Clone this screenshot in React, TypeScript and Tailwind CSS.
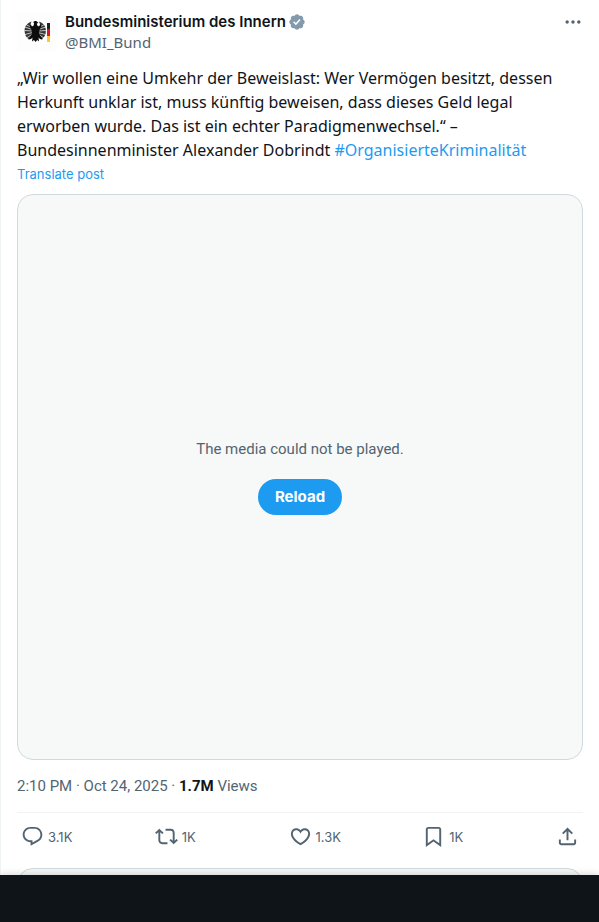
import type { ReactNode } from "react";

type IconProps = { d: string; className?: string };

function Icon({ d, className = "size-[23px]" }: IconProps) {
  return (
    <svg viewBox="0 0 24 24" aria-hidden="true" className={`shrink-0 fill-current ${className}`}>
      <path d={d} />
    </svg>
  );
}

const paths = {
  more: "M3 12c0-1.1.9-2 2-2s2 .9 2 2-.9 2-2 2-2-.9-2-2zm9 2c1.1 0 2-.9 2-2s-.9-2-2-2-2 .9-2 2 .9 2 2 2zm7 0c1.1 0 2-.9 2-2s-.9-2-2-2-2 .9-2 2 .9 2 2 2z",
  reply:
    "M1.751 10c0-4.42 3.584-8 8.005-8h4.366c4.49 0 8.129 3.64 8.129 8.13 0 2.96-1.607 5.68-4.196 7.11l-8.054 4.46v-3.69h-.067c-4.49.1-8.183-3.51-8.183-8.01zm8.005-6c-3.317 0-6.005 2.69-6.005 6 0 3.37 2.77 6.08 6.138 6.01l.351-.01h1.761v2.3l5.087-2.81c1.951-1.08 3.163-3.13 3.163-5.36 0-3.39-2.744-6.13-6.129-6.13H9.756z",
  repost:
    "M4.5 3.88l4.432 4.14-1.364 1.46L5.5 7.55V16c0 1.1.896 2 2 2H13v2H7.5c-2.209 0-4-1.79-4-4V7.55L1.432 9.48.068 8.02 4.5 3.88zM16.5 6H11V4h5.5c2.209 0 4 1.79 4 4v8.45l2.068-1.93 1.364 1.46-4.432 4.14-4.432-4.14 1.364-1.46 2.068 1.93V8c0-1.1-.896-2-2-2z",
  like: "M16.697 5.5c-1.222-.06-2.679.51-3.89 2.16l-.805 1.09-.806-1.09C9.984 6.01 8.526 5.44 7.304 5.5c-1.243.07-2.349.78-2.91 1.91-.552 1.12-.633 2.78.479 4.82 1.074 1.97 3.257 4.27 7.129 6.61 3.87-2.34 6.052-4.64 7.126-6.61 1.111-2.04 1.03-3.7.477-4.82-.561-1.13-1.666-1.84-2.908-1.91zm4.187 7.69c-1.351 2.48-4.001 5.12-8.379 7.67l-.503.3-.504-.3c-4.379-2.55-7.029-5.19-8.382-7.67-1.36-2.5-1.41-4.86-.514-6.67.887-1.79 2.647-2.91 4.601-3.01 1.651-.09 3.368.56 4.798 2.01 1.429-1.45 3.146-2.1 4.796-2.01 1.954.1 3.714 1.22 4.601 3.01.896 1.81.846 4.17-.514 6.67z",
  bookmark:
    "M4 4.5C4 3.12 5.119 2 6.5 2h11C18.881 2 20 3.12 20 4.5v18.44l-8-5.71-8 5.71V4.5zM6.5 4c-.276 0-.5.22-.5.5v14.56l6-4.29 6 4.29V4.5c0-.28-.224-.5-.5-.5h-11z",
  share:
    "M12 2.59l5.7 5.7-1.41 1.42L13 6.41V16h-2V6.41l-3.3 3.3-1.41-1.42L12 2.59zM21 15l-.02 3.51c0 1.38-1.12 2.49-2.5 2.49H5.5C4.11 21 3 19.88 3 18.5V15h2v3.5c0 .28.22.5.5.5h12.98c.28 0 .5-.22.5-.5L19 15h2z",
};

function Avatar() {
  return (
    <svg viewBox="0 0 40 40" role="img" aria-label="BMI" className="size-10 shrink-0">
      <path fill="#fdfdfd" d="M0 0h40v40H0z" />
      <path
        fill="#333"
        d="M14.5 9.500C10 11 7.600 14.500 7.600 18.500c0 4 1.400 7 4.400 9l4-5-.500-6-2.500-3zM22 9.500c4.500 1.500 6.900 5 6.900 9 0 4-1.400 7-4.400 9l-4-5 .5-6 2.500-3z"
      />
      <path
        fill="none"
        stroke="#fdfdfd"
        strokeWidth="0.700"
        d="M15.500 16 9 12.500M15.500 17.500 7.500 15M15.500 19l-8-.5M15.500 20.500l-7.500 2M15.500 22 9.500 26M21 16l6.500-3.500M21 17.500l8-2.500M21 19l8-.5M21 20.500l7.500 2M21 22l6 4"
      />
      <path
        fill="#0c0c0c"
        d="M16.200 10.500c.5-1.300 2.300-1.900 3.700-1l1.600 1.500-1.800.4.6 2.100 1.700 1 1.500-2.500.8 2.500-1.800 3.500-.5 3.500 2 3.500 1.500 2.500-2.500-.5-1.500-1.500.5 4-1.700-1.500-1.800 2-1.500-2-2 1.500.5-4-1.500 1.500-2.500.5 1.500-2.500 2-3.500-.5-3.500-1.800-3.500.8-2.500 1.500 2.500 1.700-1 .4-2.500z"
      />
      <path fill="#222" d="M30 11h3v6h-3z" />
      <path fill="#e3122a" d="M30 17h3v7h-3z" />
      <path fill="#ffc62e" d="M30 24h3v6h-3z" />
    </svg>
  );
}

function Verified() {
  return (
    <svg viewBox="0 0 22 22" role="img" aria-label="Verified account" className="size-[18px] shrink-0 fill-[#829aab]">
      <path d="M20.396 11c-.018-.646-.215-1.275-.57-1.816-.354-.54-.852-.972-1.438-1.246.223-.607.27-1.264.14-1.897-.131-.634-.437-1.218-.882-1.687-.47-.445-1.053-.75-1.687-.882-.633-.13-1.290-.083-1.897.14-.273-.587-.704-1.086-1.245-1.440S11.647 1.620 11 1.604c-.646.017-1.273.213-1.813.568s-.969.854-1.240 1.440c-.608-.223-1.267-.272-1.902-.14-.635.130-1.220.436-1.690.882-.445.470-.749 1.055-.878 1.688-.130.633-.080 1.290.144 1.896-.587.274-1.087.705-1.443 1.245-.356.540-.555 1.170-.574 1.817.020.647.218 1.276.574 1.817.356.540.856.972 1.443 1.245-.224.606-.274 1.263-.144 1.896.130.634.433 1.218.877 1.688.470.443 1.054.747 1.687.878.633.132 1.290.084 1.897-.136.274.586.705 1.084 1.246 1.439.540.354 1.170.551 1.816.569.647-.016 1.276-.213 1.817-.567s.972-.854 1.245-1.440c.604.239 1.266.296 1.903.164.636-.132 1.220-.447 1.680-.907.460-.460.776-1.044.908-1.681s.075-1.299-.165-1.903c.586-.274 1.084-.705 1.439-1.246.354-.540.551-1.170.569-1.816zM9.662 14.850l-3.429-3.428 1.293-1.302 2.072 2.072 4.400-4.794 1.347 1.246z" />
    </svg>
  );
}

function Action({ d, label, children }: { d: string; label: string; children: ReactNode }) {
  return (
    <div className="flex flex-1">
      <button type="button" aria-label={label} className="flex items-center gap-1">
        <Icon d={d} />
        <span className="pt-0.5">{children}</span>
      </button>
    </div>
  );
}

export default function App() {
  return (
    <div className="flex h-screen flex-col bg-white font-['Roboto','Noto_Sans',sans-serif] text-[#0f1419]">
      <main className="min-h-0 flex-1 overflow-hidden border-l border-[#eff3f4] px-4 pt-3">
        <article>
          <header className="flex gap-2">
            <Avatar />
            <div className="min-w-0 flex-1 font-['Inter',sans-serif] text-[15px] leading-5">
              <div className="flex items-center gap-0.5">
                <a href="#profile" className="font-semibold">Bundesministerium des Innern</a>
                <Verified />
              </div>
              <a href="#profile" className="block font-['Noto_Sans',sans-serif] text-[#536471]">@BMI_Bund</a>
            </div>
            <button type="button" aria-label="More" className="flex h-5 items-center text-[#536471]">
              <Icon d={paths.more} className="size-5" />
            </button>
          </header>
          <p className="mt-3.5 font-['Noto_Sans',sans-serif] text-base leading-6">
            „Wir wollen eine Umkehr der Beweislast: Wer Vermögen besitzt, dessen Herkunft unklar ist, muss künftig beweisen, dass dieses Geld legal erworben wurde. Das ist ein echter Paradigmenwechsel.“ – Bundesinnenminister Alexander Dobrindt{" "}
            <a href="#hashtag" className="text-[#1d9bf0]">#OrganisierteKriminalität</a>
          </p>
          <button type="button" className="block font-['Inter',sans-serif] text-[13px] leading-6 text-[#1d9bf0]">Translate post</button>
          <section className="mt-2 flex aspect-square flex-col items-center justify-center gap-5 rounded-2xl border border-[#cfd9de] bg-[#f7f9f9] text-[15px] leading-5">
            <p className="text-[#536471]">The media could not be played.</p>
            <button type="button" className="h-9 rounded-full bg-[#1d9bf0] px-[17px] font-['Inter',sans-serif] font-bold text-white">Reload</button>
          </section>
          <p className="my-4 text-[15px] leading-5 text-[#536471]">
            <a href="#status">2:10 PM · Oct 24, 2025</a> · <span className="font-bold text-[#0f1419]">1.7M</span> Views
          </p>
          <div className="flex items-center border-t border-[#eff3f4] px-1 py-3 font-['Inter',sans-serif] text-[13px] text-[#536471]">
            <Action d={paths.reply} label="Reply">3.1K</Action>
            <Action d={paths.repost} label="Repost">1K</Action>
            <Action d={paths.like} label="Like">1.3K</Action>
            <Action d={paths.bookmark} label="Bookmark">1K</Action>
            <button type="button" aria-label="Share">
              <Icon d={paths.share} />
            </button>
          </div>
        </article>
        <div className="mt-2 h-20 rounded-2xl border border-[#cfd9de] bg-[#f7f9f9]" />
      </main>
      <footer className="h-[47px] shrink-0 bg-[#0f1419] shadow-[0_0_8px_rgba(0,0,0,0.2)]" />
    </div>
  );
}
